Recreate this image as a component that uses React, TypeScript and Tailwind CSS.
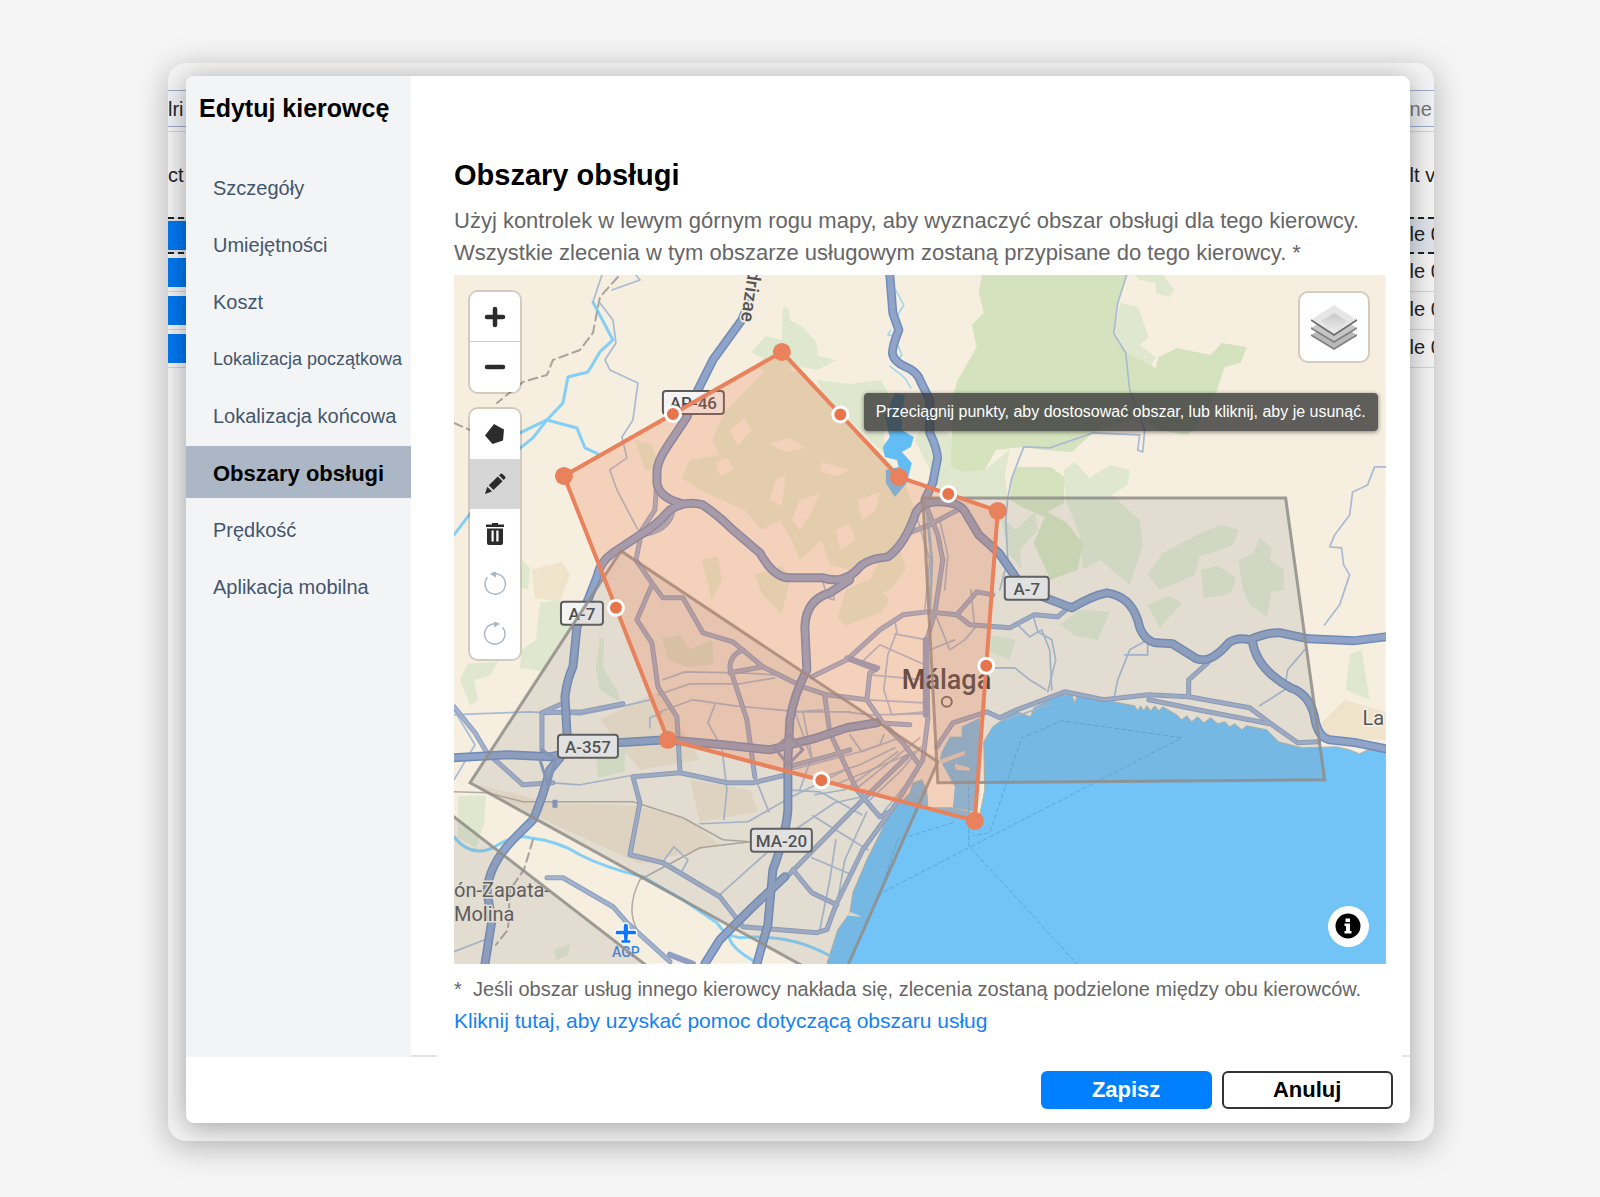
import type { ReactNode } from 'react';

const NAV = [
  { label: 'Szczegóły' },
  { label: 'Umiejętności' },
  { label: 'Koszt' },
  { label: 'Lokalizacja początkowa', long: true },
  { label: 'Lokalizacja końcowa' },
  { label: 'Obszary obsługi', active: true },
  { label: 'Prędkość' },
  { label: 'Aplikacja mobilna' },
];

function navStyle(active?: boolean, long?: boolean): string {
  if (active) return 'bg-[#abb7c4] text-[22px] font-bold text-black';
  return long ? 'text-lg text-[#44566c]' : 'text-xl text-[#44566c]';
}

// Map geometry, in the units of the map viewBox
const AREA: [number, number][] = [
  [782, 352],
  [899, 477],
  [998, 511],
  [975, 821],
  [668, 740],
  [564, 476],
];

const GREENS = [
  'M982 275 979 293 984 313 972 325 977 347 958 380 954 393 951 467 965 472 985 470 996 450 1024 447 1045 450 1072 452 1093 433 1138 417 1160 430 1187 435 1194 430 1215 397 1225 367 1241 363 1247 347 1222 343 1211 355 1177 348 1159 357 1156 368 1128 353 1114 333 1118 303 1127 275Z',
  'M1017 467 1051 467 1065 477 1064 503 1048 512 1066 522 1083 543 1078 570 1051 580 1034 543 1045 517 1024 508 1010 500 1012 478Z',
];

const LIGHT_GREENS = [
  'M1121 303 1138 307 1149 337 1140 345 1156 357 1150 368 1128 353 1114 330Z',
  'M1135 275 1163 275 1175 290 1170 297 1156 293 1156 283 1140 280Z',
  'M783 307 789 309 790 320 803 327 817 343 818 356 837 360 817 370 795 366 775 376 756 368 763 358 751 352 766 336 782 340Z',
  'M817 380 850 384 881 380 888 392 884 440 892 460 870 440 842 412 825 398Z',
  'M915 440 926 420 958 440 951 467 985 470 1010 450 1005 475 1008 498 960 497 940 490Z',
  'M1064 470 1075 462 1090 478 1110 465 1130 470 1128 485 1112 495 1140 520 1143 545 1130 585 1100 560 1083 570 1080 535 1066 500Z',
  'M1163 553 1201 533 1222 525 1239 530 1233 545 1215 552 1200 556 1195 575 1177 583 1160 590 1148 575Z',
  'M1239 560 1254 553 1260 537 1272 548 1270 560 1284 570 1284 590 1272 592 1267 617 1250 605 1243 590Z',
  'M1201 570 1218 566 1236 578 1232 592 1222 596 1204 598Z',
  'M1000 515 1016 530 1035 512 1038 530 1020 550 1022 570 1010 555Z',
  'M1060 625 1080 610 1110 612 1098 640 1075 636Z',
  'M990 635 1016 640 1010 660 990 652Z',
  'M1148 605 1170 596 1182 604 1160 628Z',
  'M725 412 770 366 800 372 850 424 905 482 915 510 893 550 850 570 830 565 822 540 800 560 792 540 780 520 762 530 745 510 700 490 682 478 690 460 720 455 712 440Z',
  'M635 440 652 444 660 470 645 470Z',
  'M702 560 718 556 722 580 712 600Z',
  'M755 575 782 566 790 580 782 614 762 594Z',
  'M846 590 868 580 890 600 882 612 846 626 838 618Z',
  'M662 638 680 636 690 650 712 640 714 664 690 668 668 660Z',
  'M522 560 530 568 528 590 521 588Z',
  'M540 603 560 600 560 625 586 596 570 628 545 672 520 668 522 650 536 640Z',
  'M460 680 468 664 498 662 490 676 474 680 478 700 470 706Z',
  'M600 637 604 640 603 668 618 692 620 702 600 690 596 670Z',
  'M458 796 486 796 484 824 476 848 458 838Z',
  'M596 752 626 748 624 772 598 778Z',
  'M554 950 570 944 568 956 556 960Z',
  'M1350 655 1362 650 1370 700 1346 690Z',
  'M860 600 880 560 900 548 906 570 890 590Z',
];

// bare ground inside the woods
const CLEARINGS = [
  'M730 430 744 418 752 430 738 446Z',
  'M768 444 790 438 806 448 786 452Z',
  'M776 480 786 474 782 506 770 500Z',
  'M800 500 820 494 812 512 800 530 792 520Z',
  'M822 462 850 470 838 476 820 472Z',
  'M858 500 880 492 876 510 862 520Z',
  'M716 462 728 458 734 470 720 476Z',
  'M836 530 850 524 856 540 840 550Z',
];

const TAN = [
  'M600 720 660 690 700 760 640 770Z',
  'M470 783 550 803 636 806 690 820 720 845 640 864 540 818Z',
  'M690 780 750 790 758 812 700 822Z',
  'M532 570 562 562 570 575 560 602 535 598Z',
  'M1320 725 1345 700 1386 712 1386 740 1330 738Z',
];

const HIGHWAYS = [
  'M485 964 492 920 487 893 Q488 866 513 840 L533 820 Q542 800 550 770 L560 758 Q569 745 567 733 L565 697 Q567 680 573 667 L577 627 588 600 597 577 Q600 562 613 553 L637 537 Q654 528 670 510 Q686 500 703 505 Q718 515 733 530 L760 553 Q774 578 790 578 L823 578 Q845 585 860 567 Q868 559 888 557 Q905 545 916 513 Q922 500 944 502 Q962 503 967 515 L979 535 999 553 1013 573 Q1022 590 1038 595 L1072 608 Q1092 596 1107 593 Q1130 596 1138 620 Q1142 640 1156 643 L1173 644 1197 659 Q1211 664 1229 643 Q1238 637 1250 640 Q1268 632 1281 633 L1309 639 1354 641 1386 637',
  'M750 300 742 320 713 360 698 390 687 417 667 447 Q657 462 657 472 L657 483 Q659 498 683 504',
  'M890 275 893 313 899 330 Q891 350 893 355 Q895 362 906 367 Q918 372 921 382 L930 400 930 433 Q940 455 937 462 L933 483 925 500',
  'M850 580 830 593 Q806 600 805 627 L807 670 Q794 695 790 720 L788 760 788 810 Q786 835 773 870 L768 925 757 964',
  'M785 877 753 907 720 940 705 964',
  'M454 758 507 755 550 757 617 743 667 740 723 745 770 750 817 738 847 728 877 723',
  'M1253 643 Q1258 670 1291 688 Q1312 695 1316 723 Q1320 738 1330 740 L1357 743 1386 749',
];

const ROADS = [
  'M877 723 910 725',
  'M1208 663 1189 680 1189 697',
  'M937 747 953 723 987 712 1000 718 1017 710 1065 692 1104 700 1149 695 1189 697 1250 708 1270 723 1298 743 1319 742',
  'M1149 700 1198 710 1270 724',
  'M812 677 847 660 880 630 903 615 927 612 957 615 977 592 993 595',
  'M957 615 970 625 1010 628 1034 615 1058 617 1072 605',
  'M943 560 935 613 927 640 928 720 923 760 897 803 863 850 837 903 827 930 817 933 743 927 720 897 663 863 630 855 640 803 633 777 680 773 727 783 753 783 787 775',
  'M926 505 938 535 943 560',
  'M958 510 930 525 904 535',
  'M640 540 636 560 652 583 663 598 683 598 703 633 733 642 763 667 803 687 827 695 867 700',
  'M652 585 637 620 652 643 658 687 677 717 680 770',
  'M743 650 Q730 655 730 668 L747 720 755 777',
  'M730 673 763 667',
  'M825 697 830 733 857 790 880 817 890 812',
  'M847 658 878 668 870 673 867 700 883 723 903 743 918 763',
  'M907 757 863 800 787 877',
  'M793 870 812 893 837 905',
  'M454 707 475 733 487 753 523 785 553 783',
  'M542 750 542 713 583 712 623 704',
  'M542 713 562 704',
  'M547 878 563 878 613 907 627 923 670 962',
  'M657 480 655 510 640 533',
  'M673 512 Q668 532 640 535',
  'M788 767 830 756 850 750',
];

const STREETS = [
  'M663 680 685 672 740 673 775 675',
  'M658 695 690 684 740 684 775 678',
  'M660 712 693 700 735 706 800 712 850 712',
  'M715 705 708 723 722 748 727 790 724 820',
  'M755 777 769 812',
  'M803 712 812 757 800 790',
  'M823 710 795 712 812 760',
  'M895 620 897 632 888 655 884 690 892 715 925 712',
  'M895 634 927 640',
  'M860 664 880 645 925 665',
  'M870 675 925 680',
  'M868 700 925 703',
  'M845 712 870 715 924 714',
  'M850 735 862 752 900 738',
  'M792 770 860 752 880 745 884 735',
  'M830 775 860 765 895 748',
  'M835 785 915 752',
  'M815 795 845 790 870 772 898 752',
  'M855 790 885 766 920 738',
  'M870 800 902 770 921 747',
  'M884 812 905 786 915 770',
  'M935 613 950 650 965 640 975 628 971 590',
  'M930 650 955 640',
  'M700 824 748 822 790 798 850 768',
  'M795 830 835 803 872 795',
  'M787 790 820 792 862 815',
  'M813 816 868 850',
  'M812 858 852 875',
  'M836 840 830 880 820 930',
  'M867 812 845 860 838 900',
  'M720 895 768 852',
  'M663 862 674 847 688 860 682 872',
  'M454 715 475 714 530 712 580 715 620 707 650 700',
  'M553 783 580 785 630 776',
  'M454 780 475 745 454 710',
  'M454 952 490 938',
  'M1018 625 1030 637 1042 630 1050 650 1052 690',
  'M1034 618 1038 632 1052 640 1056 660 1048 692',
  'M990 668 1015 668 1030 680 1046 690',
  'M1148 640 1130 650 1118 680 1114 700',
  'M1148 640 1148 655 1125 655',
  'M1305 650 1288 670 1285 690 1260 706',
  'M918 520 930 560 925 610',
  'M940 520 948 555 945 590',
  'M1005 720 1050 705',
  'M823 582 828 598 834 600 834 590',
  'M650 728 650 718 662 713',
  'M1127 275 1118 303 1114 333 1126 353 1130 390 1145 430 1143 452 1138 450 1140 435 1093 433 1050 448 1024 447 1012 478 1008 498 1006 520 1008 560 1000 590',
  'M1386 467 1375 467 1368 485 1353 492 1350 515 1335 535 1330 547 1342 548 1344 565 1350 575 1340 605 1325 625',
  'M600 303 613 320 616 343 605 360 610 370 638 383 633 420 622 437 627 458 610 470 617 490 638 530',
  'M612 290 640 280 636 275',
  'M602 275 593 302',
];

const RIVERS = [
  'M593 302 613 340 600 352 588 372 568 377 563 403 547 420 533 438 518 450',
  'M547 420 518 434',
  'M547 420 577 428 585 448 598 454',
  'M454 535 470 514',
  'M454 837 Q470 858 493 848 Q515 834 530 838 Q560 842 580 855 Q605 868 643 877 L683 900 717 923 Q725 936 740 938 Q790 934 828 955',
  'M729 936 Q730 948 755 962',
];

const SHIELDS = [
  { label: 'AP-46', x: 663, y: 391, w: 61 },
  { label: 'A-7', x: 561, y: 602, w: 42 },
  { label: 'A-7', x: 1005, y: 577, w: 44 },
  { label: 'A-357', x: 558, y: 735, w: 60 },
  { label: 'MA-20', x: 751, y: 829, w: 61 },
];

function midpoint(i: number): [number, number] {
  const [x1, y1] = AREA[i];
  const [x2, y2] = AREA[(i + 1) % AREA.length];
  return [(x1 + x2) / 2, (y1 + y2) / 2];
}

function MapCanvas() {
  return (
    <svg viewBox="454 275 932 689" className="block w-full" role="img" aria-label="Mapa">
      <rect x="454" y="275" width="932" height="689" fill="#f6eedf" />
      {TAN.map(d => (
        <path key={d} d={d} fill="#f0e3cc" />
      ))}
      {LIGHT_GREENS.map(d => (
        <path key={d} d={d} fill="#dfe8ce" />
      ))}
      {CLEARINGS.map(d => (
        <path key={d} d={d} fill="#f6eedf" />
      ))}
      {GREENS.map(d => (
        <path key={d} d={d} fill="#d4e3bd" />
      ))}

      {/* sea and harbour */}
      <path
        d="M827 964 838 930 850 913 853 893 867 860 887 820 897 807 910 793 913 783 922 780 927 790 928 808 953 808 980 815 985 790 984 742 993 727 1010 715 1017 712 1031 717 1034 708 1058 696 1072 695 1075 703 1077 697 1093 697 1114 702 1135 706 1138 711 1141 706 1144 711 1147 706 1151 711 1155 706 1159 711 1163 707 1177 715 1182 720 1187 716 1192 722 1198 717 1204 723 1211 718 1218 724 1225 722 1230 727 1235 724 1242 730 1247 726 1267 730 1279 742 1302 748 1337 747 1350 750 1360 754 1368 750 1386 752 1386 964Z"
        fill="#72c3f6"
        stroke="#b9b3a2"
      />
      <path d="M980 718 962 727 962 737 950 737 942 752 940 760 955 787 953 808 975 812 980 760Z" fill="#72c3f6" />
      <path d="M940 760 965 751 965 755 942 764ZM955 764 970 768 970 771 956 770Z" fill="#e9dccb" />
      <path d="M850 912 862 917 848 916Z" fill="#efe6d6" />
      <path
        d="M895 393 905 395 902 417 902 430 914 437 911 447 902 452 912 463 907 483 895 497 886 483 886 470 899 467 897 460 885 457 883 447 890 437 885 417Z"
        fill="#62bdf5"
      />

      <g fill="none" strokeLinejoin="round" strokeLinecap="round">
        {RIVERS.map(d => (
          <path key={d} d={d} stroke="#83cff5" strokeWidth="3" />
        ))}
        <path
          d="M896 290 904 305 896 318M891 330 888 335 896 336M898 345 902 355 898 360M890 366 905 378 911 388"
          stroke="#9ed4ef"
          strokeWidth="1.5"
        />
        <path d="M927 510 932 560 930 612" stroke="#8fc3e0" strokeWidth="3" />
        <path
          d="M618 277 600 297 593 333 580 350 553 360 547 375 523 382 497 403M454 423 470 430M533 840 524 870 510 890 508 930 496 945"
          stroke="#a8a39c"
          strokeWidth="2"
          strokeDasharray="9 5"
        />
        <path
          d="M454 792 487 793 523 802 633 802 683 818 723 840 750 842M750 842 700 848 640 880 Q620 920 650 945"
          stroke="#b0aba4"
          strokeWidth="1.5"
        />
        {STREETS.map(d => (
          <path key={d} d={d} stroke="#a9bbd3" strokeWidth="1.7" />
        ))}
        {ROADS.map(d => (
          <path key={d} d={d} stroke="#8c9fc2" strokeWidth="5" />
        ))}
        {ROADS.map(d => (
          <path key={d} d={d} stroke="#a3b2cd" strokeWidth="3" />
        ))}
        <path d="M670 955 693 964M850 659 876 669M926 640 926 715" stroke="#8f9fc4" strokeWidth="6" />
        {HIGHWAYS.map(d => (
          <path key={d} d={d} stroke="#6f8bb9" strokeWidth="9" />
        ))}
        {HIGHWAYS.map(d => (
          <path key={d} d={d} stroke="#8fa4c8" strokeWidth="6" />
        ))}
        <path d="M542 750 556 760 548 785 540 760M775 748 790 735 803 750 788 765Z" stroke="#8598c2" strokeWidth="3" />
        <path d="M555 800v8" stroke="#8598c2" strokeWidth="5" strokeLinecap="butt" />
        <path
          d="M953 823 898 840 880 894 1182 738 1062 721 1022 738 990 833 974 836M969 780 969 846 1077 964"
          stroke="#5aa7d6"
          strokeDasharray="4 3"
        />
      </g>

      {/* place names */}
      <g fontFamily="Roboto, sans-serif" fill="#55565a" stroke="#f6eedf" strokeWidth="3" paintOrder="stroke">
        <text x="902" y="689" fontSize="27" fontWeight="500" stroke="none" fill="#3f3d40">Málaga</text>
        <text x="1363" y="725" fontSize="20">La</text>
        <text x="454" y="897" fontSize="20">ón-Zapata-</text>
        <text x="454" y="921" fontSize="20">Molina</text>
        <text x="741" y="321" fontSize="19" fontWeight="500" textAnchor="end" transform="rotate(98 741 321)">adrizae</text>
        <text x="626" y="957" fontSize="14" fontWeight="500" textAnchor="middle" fill="#3b86e0">AGP</text>
      </g>
      <circle cx="947" cy="702" r="5" fill="#f6eedf" stroke="#6d6462" strokeWidth="2" />
      <path
        d="M626 924c1.500 0 2 1 2 3v4h7q1 0 1 1.500v2h-8l-.6 6h3v2.500h-9v-2.500h3l-.6-6h-8v-2q0-1.500 1-1.500h7v-4c0-2 .6-3 2-3Z"
        fill="#0b76ff"
        stroke="#fff"
        strokeWidth="3"
        paintOrder="stroke"
      />
      <g fontFamily="Roboto, sans-serif" fontSize="17" fontWeight="500" textAnchor="middle" fill="#4a4a4c">
        {SHIELDS.map(s => (
          <g key={s.x}>
            <rect x={s.x} y={s.y} width={s.w} height="23" rx="3" fill="#f4f4f4" stroke="#5a5a5c" strokeWidth="2" />
            <text x={s.x + s.w / 2} y={s.y + 18}>{s.label}</text>
          </g>
        ))}
      </g>

      {/* other drivers' areas */}
      <g fill="#808080" fillOpacity="0.16" stroke="#8f8d8a" strokeOpacity="0.85" strokeWidth="3">
        <path d="M923 498H1286L1325 780 938 783Z" />
        <path d="M470 783 621 551 938 762 847 968H806Z" />
        <path d="M450 814 648 967H450Z" />
      </g>

      {/* the edited area with its drag handles */}
      <polygon
        points={AREA.map(p => p.join(',')).join(' ')}
        fill="#ee7d4d"
        fillOpacity="0.25"
        stroke="#e8815c"
        strokeWidth="4"
      />
      {AREA.map(([x, y]) => (
        <circle key={x} cx={x} cy={y} r="9" fill="#e8815c" />
      ))}
      {AREA.map(([x], i) => {
        const [mx, my] = midpoint(i);
        return <circle key={x} cx={mx} cy={my} r="7.500" fill="#e8744c" stroke="#fff" strokeWidth="3" />;
      })}
    </svg>
  );
}

function MapButton({ label, active, children }: { label: string; active?: boolean; children: ReactNode }) {
  return (
    <button
      aria-label={label}
      className={`flex h-[50px] w-full items-center justify-center ${active ? 'bg-[#d6d6d6]' : 'bg-white'}`}
    >
      <svg viewBox="0 0 24 24" className="size-6" fill="#2b2b2b">
        {children}
      </svg>
    </button>
  );
}

function MapControls() {
  return (
    <div className="absolute left-4 top-[17px] flex w-[50px] flex-col gap-[17px]">
      <div className="divide-y divide-[#ccc] overflow-hidden rounded-lg shadow-[0_0_0_2px_rgba(0,0,0,0.15)]">
        <MapButton label="Powiększ">
          <path d="M12 4v16M4 12h16" stroke="#2b2b2b" strokeWidth="4.500" strokeLinecap="round" />
        </MapButton>
        <MapButton label="Pomniejsz">
          <path d="M4 12h16" stroke="#2b2b2b" strokeWidth="4.500" strokeLinecap="round" />
        </MapButton>
      </div>
      <div className="overflow-hidden rounded-lg shadow-[0_0_0_2px_rgba(0,0,0,0.15)]">
        <MapButton label="Rysuj wielokąt">
          <path d="M11 2 21 7.500 20 18.500 9.500 22 2 13.500Z" />
        </MapButton>
        <MapButton label="Edytuj" active>
          <path d="M2 22 4.300 14.800 9 19.500ZM5.800 13.300 14.800 4.500 19.500 9.200 10.500 18ZM16 3.300l1.400-1.400q1-.9 2 0l2.700 2.700q.9 1 0 2L20.700 8Z" />
        </MapButton>
        <MapButton label="Usuń">
          <path
            fillRule="evenodd"
            d="M9 1h6v1.500h6V5H3V2.500h6ZM4 6.500h16V21q0 2-2 2H6q-2 0-2-2ZM8.500 8.500v11h2.200v-11ZM13.300 8.500v11h2.200v-11Z"
          />
        </MapButton>
        <MapButton label="Cofnij">
          <path d="M13 1.800a10.200 10.200 0 1 1-8.500 3.500" fill="none" stroke="#a9b8c9" strokeWidth="1.500" />
          <path d="M13-1.500v7L7 2Z" fill="#a9b8c9" />
        </MapButton>
        <MapButton label="Ponów">
          <path d="M11 1.800a10.200 10.200 0 1 0 8.500 3.500" fill="none" stroke="#a9b8c9" strokeWidth="1.500" />
          <path d="M11-1.500v7L17 2Z" fill="#a9b8c9" />
        </MapButton>
      </div>
    </div>
  );
}

function LayersIcon() {
  return (
    <svg viewBox="0 0 46 46" className="size-[46px]">
      <defs>
        <linearGradient id="sheet" x1="0" y1="0" x2="0" y2="1">
          <stop offset="0" stopColor="#c9c9c9" />
          <stop offset="1" stopColor="#eeeeee" />
        </linearGradient>
      </defs>
      <path d="M0 31 23 17 46 31 23 45Z" fill="#b9b9b9" />
      <path d="M0 31 23 45 46 31" fill="none" stroke="#808080" strokeWidth="1.500" />
      <path d="M0 24 23 10 46 24 23 38Z" fill="#c6c6c6" />
      <path d="M0 24 23 38 46 24" fill="none" stroke="#808080" strokeWidth="1.500" />
      <path d="M0 16 23 1 46 16 23 31Z" fill="#e6e6e6" />
      <path d="M10 17 23 9 36 17 23 29Z" fill="url(#sheet)" />
      <path d="M0 16 23 31 46 16" fill="none" stroke="#6a6a6a" strokeWidth="1.500" />
    </svg>
  );
}

// The table the dialog was opened from; only its edges show
function TableBehind() {
  const rows = [0, 1, 2, 3];
  return (
    <div className="flex flex-col whitespace-nowrap pt-[27px] text-xl text-[#222] [grid-area:1/1]" aria-hidden="true">
      <div className="flex h-[37px] items-center justify-between border-y border-[#9aabc9] bg-[#f1f2f6]">
        <span className="w-[18px] overflow-hidden">lri</span>
        <span className="w-6 overflow-hidden text-[#777]">ne</span>
      </div>
      <div className="mt-1 flex h-[86px] items-center justify-between border-t border-[#d4d4d4]">
        <span className="w-[18px] overflow-hidden">ct</span>
        <span className="w-6 overflow-hidden">lt v</span>
      </div>
      {rows.map(i => (
        <div
          key={i}
          className={`flex items-center justify-between ${
            i === 0 ? 'h-[37px] border-y-2 border-dashed border-[#222] bg-[#dfe4ec]' : 'h-[38px] border-b border-[#d4d4d4]'
          }`}
        >
          <span className="h-[29px] w-[18px] bg-[#0078f0]" />
          <span className="w-6 overflow-hidden pb-1">le 0</span>
        </div>
      ))}
    </div>
  );
}

export default function App() {
  return (
    <div className="min-h-screen bg-[#f5f5f5] pb-14 pl-[10.500%] pr-[10.400%] pt-[63px] font-['Liberation_Sans',Arial,sans-serif]">
      <div className="grid overflow-hidden rounded-[18px] bg-[#f4f4f4] shadow-[0_6px_32px_rgba(0,0,0,0.28)]">
        <TableBehind />
        <div className="relative mb-[18px] ml-[18px] mr-6 mt-[13px] overflow-hidden rounded-lg bg-white shadow-[0_4px_28px_rgba(0,0,0,0.35)] [grid-area:1/1]">
          <div className="flex">
            <aside className="w-[225px] shrink-0 bg-[#f3f4f6]">
              <h1 className="mb-[37px] pl-[13px] pt-4 text-[25px] font-bold leading-8 text-black">Edytuj kierowcę</h1>
              <nav className="flex flex-col gap-[5px]">
                {NAV.map(item => (
                  <a
                    key={item.label}
                    href="#"
                    className={`flex h-[52px] items-center whitespace-nowrap pl-[27px] pt-0.5 ${navStyle(item.active, item.long)}`}
                  >
                    {item.label}
                  </a>
                ))}
              </nav>
            </aside>

            <div className="flex min-w-0 grow flex-col">
              <main className="grow pb-[18px] pl-[43px] pr-6 pt-[78px]">
                <h2 className="text-[29px] font-bold leading-[42px] text-black">Obszary obsługi</h2>
                <p className="mb-1.5 mt-[9px] whitespace-nowrap text-[22px] leading-8 text-[#666]">
                  Użyj kontrolek w lewym górnym rogu mapy, aby wyznaczyć obszar obsługi dla tego kierowcy.
                  <br />
                  Wszystkie zlecenia w tym obszarze usługowym zostaną przypisane do tego kierowcy. *
                </p>
                <div className="relative">
                  <MapCanvas />
                  <MapControls />
                  <button
                    aria-label="Warstwy"
                    className="absolute right-4 top-4 flex h-[72px] w-[72px] items-center justify-center rounded-[10px] border-2 border-[#d5ccbd] bg-white"
                  >
                    <LayersIcon />
                  </button>
                  <div
                    role="tooltip"
                    className="absolute right-2 top-[118px] rounded bg-[#383838]/80 px-3 text-base leading-[38px] text-white shadow-[0_1px_4px_rgba(0,0,0,0.5)]"
                  >
                    Przeciągnij punkty, aby dostosować obszar, lub kliknij, aby je usunąć.
                  </div>
                  <button
                    aria-label="Informacje"
                    className="absolute bottom-[17px] right-[17px] flex size-[41px] items-center justify-center rounded-full bg-white"
                  >
                    <svg viewBox="0 0 26 26" className="size-[26px]">
                      <circle cx="13" cy="13" r="12.500" />
                      <path d="M10.500 5.500h4.500v3.500h-4.500ZM9.500 10.500h5.500v7.500h1.500v2.500h-7v-2.500h1.500v-5h-1.500Z" fill="#fff" />
                    </svg>
                  </button>
                </div>
                <p className="mt-[9px] whitespace-nowrap text-xl leading-8 text-[#666]">
                  *&nbsp; Jeśli obszar usług innego kierowcy nakłada się, zlecenia zostaną podzielone między obu kierowców.
                </p>
                <a href="#" className="block text-[21px] leading-8 text-[#1482f5]">
                  Kliknij tutaj, aby uzyskać pomoc dotyczącą obszaru usług
                </a>
              </main>
              <div className="flex h-0.5 justify-between">
                <span className="w-[26px] bg-[#e4e5e7]" />
                <span className="w-2 bg-[#e4e5e7]" />
              </div>
            </div>
          </div>

          <footer className="flex justify-end gap-[10px] py-[14px] pr-[17px] text-[22px] font-bold">
            <button className="h-[38px] w-[171px] rounded-md bg-[#0080ff] text-white">Zapisz</button>
            <button className="h-[38px] w-[171px] rounded-md border-2 border-[#333] bg-white text-black">Anuluj</button>
          </footer>
        </div>
      </div>
    </div>
  );
}
